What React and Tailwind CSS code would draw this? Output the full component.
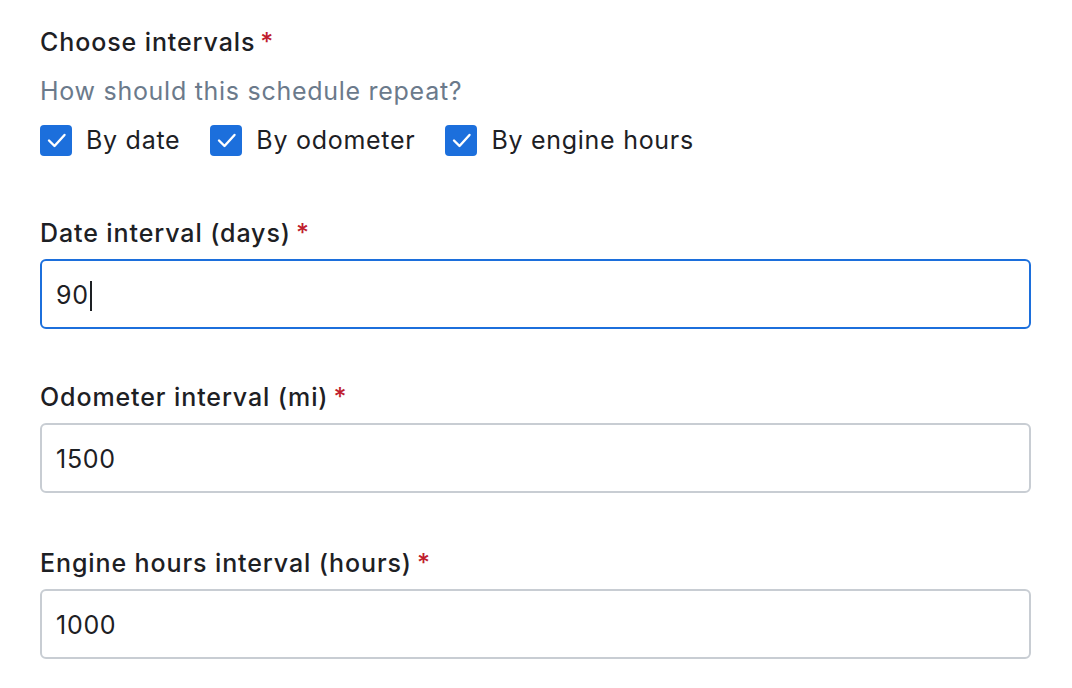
const FONT = { fontFamily: 'Inter, "Noto Sans", sans-serif' };

function Label({ children, className = '' }) {
  return (
    <div className={`text-[25px] leading-8 font-medium tracking-[0.036em] text-[#1d2024] ${className}`}>
      {children}
      <span className="ml-[5px] text-[#c01d2e]">*</span>
    </div>
  );
}

function CheckItem({ label }) {
  return (
    <label className="flex items-center gap-[14px]">
      <span className="flex h-[31px] w-[32px] items-center justify-center rounded-[4px] bg-[#1c6fdc]">
        <svg viewBox="0 0 32 32" className="h-[32px] w-[32px]" fill="none" stroke="white" strokeWidth="2.4" strokeLinecap="round" strokeLinejoin="round">
          <path d="M9 16.5l5.5 5.5L24.5 11" />
        </svg>
      </span>
      <span className="text-[25px] leading-8 text-[#1d2024]">{label}</span>
    </label>
  );
}

function Field({ label, value, focused, className = '' }) {
  return (
    <div className={className}>
      <Label>{label}</Label>
      <div
        className={`mt-[10px] flex h-[70px] items-center rounded-[6px] bg-white px-[14px] pt-[4px] text-[25px] text-[#1d2024] ${
          focused ? 'border-2 border-[#1c6fdc]' : 'border-2 border-[#c8cdd3]'
        }`}
      >
        <span>{value}</span>
        {focused && <span className="ml-[1px] h-[30px] w-[2px] bg-[#1d2024]" />}
      </div>
    </div>
  );
}

export default function App() {
  return (
    <div className="min-h-screen bg-white pl-[40px] pr-[41px] pt-[26px] tracking-[0.045em]" style={FONT}>
      <Label>Choose intervals</Label>
      <div className="mt-[17px] text-[25px] leading-8 text-[#6b7a8b]">How should this schedule repeat?</div>
      <div className="mt-[17px] flex items-center gap-[30px]">
        <CheckItem label="By date" />
        <CheckItem label="By odometer" />
        <CheckItem label="By engine hours" />
      </div>

      <Field className="mt-[61px]" label="Date interval (days)" value="90" focused />
      <Field className="mt-[52px]" label="Odometer interval (mi)" value="1500" />
      <Field className="mt-[54px]" label="Engine hours interval (hours)" value="1000" />
    </div>
  );
}
